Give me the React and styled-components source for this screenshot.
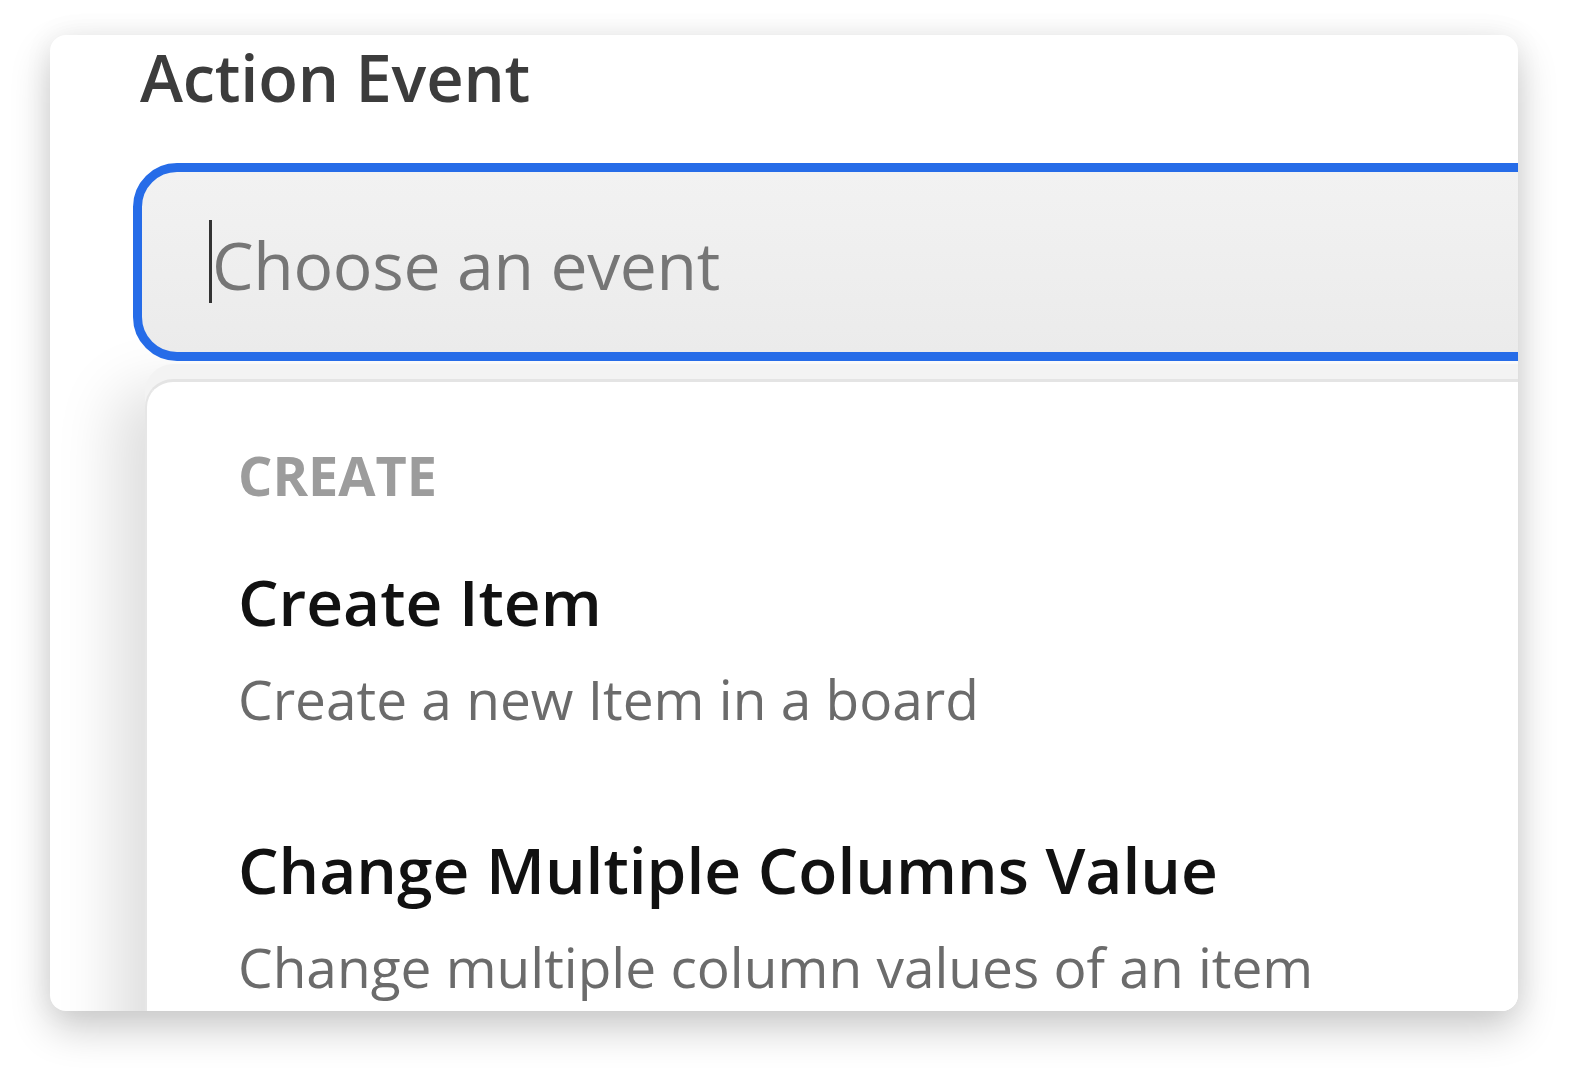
import React from "react";
import styled, { createGlobalStyle } from "styled-components";

const Global = createGlobalStyle`
  html, body { margin: 0; padding: 0; background: #ffffff; }
  body { font-family: "Open Sans", "Noto Sans", sans-serif; }
  * { box-sizing: border-box; }
`;

const Page = styled.div`
  width: 1573px;
  height: 1078px;
  padding: 35px 55px 0 50px;
  overflow: hidden;
`;

const Card = styled.div`
  width: 1468px;
  height: 976px;
  background: #ffffff;
  border-radius: 16px;
  overflow: hidden;
  padding: 0 0 0 90px;
  box-shadow: 0 18px 40px rgba(0, 0, 0, 0.2), 0 0 30px rgba(0, 0, 0, 0.06);
`;

const Title = styled.h1`
  margin: 0;
  font-size: 65px;
  line-height: 1.3;
  font-weight: 600;
  color: #3c3c3c;
  letter-spacing: -0.2px;
`;

const Field = styled.div`
  position: relative;
  z-index: 1;
  margin: 43px 0 0 -7px;
  width: calc(100% + 120px);
  height: 198px;
  border: 9px solid #266ce8;
  border-radius: 44px;
  background: linear-gradient(#f2f2f2, #ebebeb);
  display: flex;
  align-items: center;
  padding-left: 67px;
`;

const Caret = styled.span`
  width: 3px;
  height: 83px;
  background: #333333;
  flex: none;
`;

const Placeholder = styled.span`
  font-size: 66px;
  line-height: 1.2;
  font-weight: 500;
  color: #767676;
  letter-spacing: -0.3px;
  margin-top: 6px;
`;

const Panel = styled.div`
  margin: 18px 0 0 5px;
  width: calc(100% + 120px);
  height: 700px;
  background: #ffffff;
  border-top: 3px solid #e4e4e4;
  border-left: 2px solid #e6e6e6;
  border-top-left-radius: 28px;
  padding: 66px 0 0 91px;
  box-shadow: 0 -15px 0 #f3f3f3, -30px 10px 60px rgba(0, 0, 0, 0.13);
`;

const GroupLabel = styled.div`
  font-size: 54px;
  line-height: 1;
  font-weight: 700;
  color: #9c9c9c;
  margin-bottom: 68px;
`;

const Item = styled.div`
  margin-bottom: ${(p) => (p.$last ? 0 : 112)}px;
`;

const ItemTitle = styled.div`
  font-size: 64px;
  line-height: 1;
  font-weight: 600;
  color: #111111;
`;

const ItemDesc = styled.div`
  font-size: 55px;
  line-height: 1;
  font-weight: 400;
  color: #6b6b6b;
  margin-top: 37px;
`;

const items = [
  { title: "Create Item", desc: "Create a new Item in a board" },
  { title: "Change Multiple Columns Value", desc: "Change multiple column values of an item" },
];

export default function App() {
  return (
    <>
      <Global />
      <Page>
        <Card>
          <Title>Action Event</Title>
          <Field>
            <Caret />
            <Placeholder>Choose an event</Placeholder>
          </Field>
          <Panel>
            <GroupLabel>CREATE</GroupLabel>
            {items.map((it, i) => (
              <Item key={it.title} $last={i === items.length - 1}>
                <ItemTitle>{it.title}</ItemTitle>
                <ItemDesc>{it.desc}</ItemDesc>
              </Item>
            ))}
          </Panel>
        </Card>
      </Page>
    </>
  );
}
